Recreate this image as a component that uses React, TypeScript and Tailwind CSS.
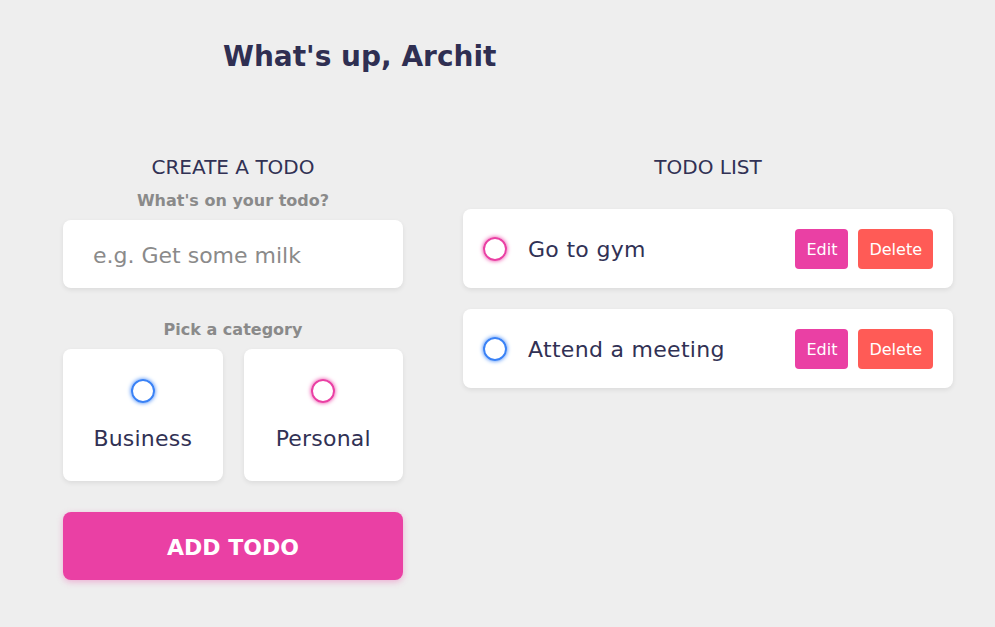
import { useState } from 'react'

type Category = 'business' | 'personal'

type Todo = {
  id: number
  content: string
  category: Category
}

const initialTodos: Todo[] = [
  { id: 1, content: 'Go to gym', category: 'personal' },
  { id: 2, content: 'Attend a meeting', category: 'business' },
]

function Bubble({ category }: { category: Category }) {
  return (
    <span
      className={
        category === 'business'
          ? 'block h-6 w-6 shrink-0 rounded-full border-2 border-[#3a82f6] shadow-[0_0_4px_#3a82f6]'
          : 'block h-6 w-6 shrink-0 rounded-full border-2 border-[#ea40a4] shadow-[0_0_4px_#ea40a4]'
      }
    />
  )
}

function CategoryCard({ category, label }: { category: Category; label: string }) {
  return (
    <label className="flex cursor-pointer flex-col items-center gap-[22px] rounded-lg bg-white pt-[30px] pb-[29px] shadow-[0_2px_5px_rgba(0,0,0,0.08)]">
      <Bubble category={category} />
      <span className="pt-px text-[22px] leading-[26px] tracking-[0.2px] text-[#313154]">{label}</span>
    </label>
  )
}

function TodoItem({ todo }: { todo: Todo }) {
  return (
    <div className="flex h-[79px] items-center rounded-lg bg-white pr-5 pl-5 shadow-[0_2px_5px_rgba(0,0,0,0.08)]">
      <Bubble category={todo.category} />
      <div className="ml-[21px] flex-1 pt-[2px] text-[22px] leading-[26px] tracking-[0.3px] text-[#313154]">
        {todo.content}
      </div>
      <div className="flex gap-[10px]">
        <button className="h-10 rounded bg-[#ea40a4] px-[11px] pt-[2px] text-[16px] text-white">Edit</button>
        <button className="h-10 rounded bg-[#ff5b56] px-[11px] pt-[2px] text-[16px] text-white">Delete</button>
      </div>
    </div>
  )
}

export default function App() {
  const [todos] = useState(initialTodos)

  return (
    <div className="min-h-screen bg-[#eeeeee] font-['DejaVu_Sans',sans-serif] text-[#313154]">
      <header className="pt-[40px] pl-[223px]">
        <h2 className="text-[28px] leading-[34px] font-bold text-[#2f2f52]">What's up, Archit</h2>
      </header>

      <div className="mt-[81px] flex gap-[60px] pl-[63px]">
        <section className="w-[340px]">
          <h3 className="text-center text-[20px] leading-[24px]">CREATE A TODO</h3>
          <form>
            <h4 className="mt-[12px] text-center text-[16px] leading-[20px] font-bold text-[#8a8a8a]">
              What's on your todo?
            </h4>
            <input
              type="text"
              placeholder="e.g. Get some milk"
              className="mt-[9px] block h-[68px] w-full rounded-lg bg-white px-[30px] pt-[2px] text-[22px] text-[#313154] shadow-[0_2px_5px_rgba(0,0,0,0.08)] outline-none placeholder:text-[#8a8a8a]"
            />
            <h4 className="mt-[32px] text-center text-[16px] leading-[20px] font-bold text-[#8a8a8a]">
              Pick a category
            </h4>
            <div className="mt-[9px] grid grid-cols-2 gap-[21px]">
              <CategoryCard category="business" label="Business" />
              <CategoryCard category="personal" label="Personal" />
            </div>
            <button
              type="button"
              className="mt-[31px] block h-[68px] w-full rounded-lg bg-[#ea40a4] pt-[2px] text-[22px] font-bold text-white shadow-[0_2px_6px_rgba(234,64,164,0.35)]"
            >
              ADD TODO
            </button>
          </form>
        </section>

        <section className="w-[490px]">
          <h3 className="text-center text-[20px] leading-[24px]">TODO LIST</h3>
          <div className="mt-[30px] flex flex-col gap-[21px]">
            {todos.map((todo) => (
              <TodoItem key={todo.id} todo={todo} />
            ))}
          </div>
        </section>
      </div>
    </div>
  )
}
